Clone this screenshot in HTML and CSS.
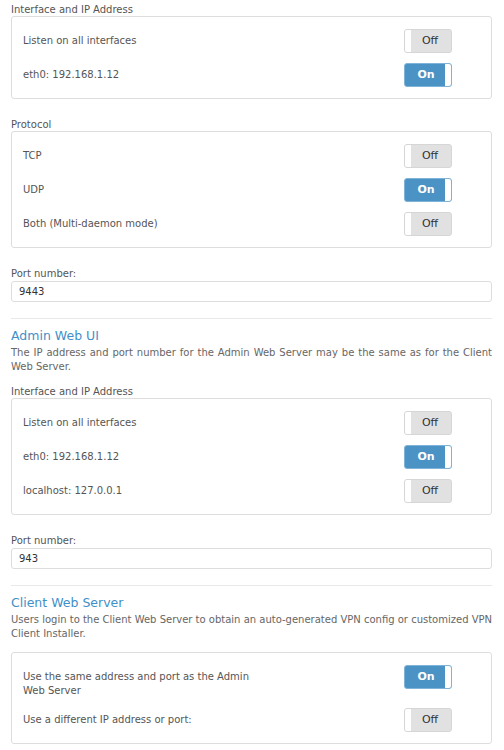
FILE: index.html
```html
<!DOCTYPE html>
<html lang="en">
<head>
  <meta charset="UTF-8">
  <meta name="viewport" content="width=device-width, initial-scale=1.0">
  <title>Web Server Settings</title>
  <link rel="stylesheet" href="styles.css">
</head>
<body>
  <div class="page">
    <div class="field-label">Interface and IP Address</div>
    <div class="box">
      <div class="row">
        <span class="row-text">Listen on all interfaces</span>
        <button class="toggle">Off</button>
      </div>
      <div class="row">
        <span class="row-text">eth0: 192.168.1.12</span>
        <button class="toggle on">On</button>
      </div>
    </div>

    <div class="field-label spaced">Protocol</div>
    <div class="box">
      <div class="row">
        <span class="row-text">TCP</span>
        <button class="toggle">Off</button>
      </div>
      <div class="row">
        <span class="row-text">UDP</span>
        <button class="toggle on">On</button>
      </div>
      <div class="row">
        <span class="row-text">Both (Multi-daemon mode)</span>
        <button class="toggle">Off</button>
      </div>
    </div>

    <div class="field-label spaced">Port number:</div>
    <input class="text-input" type="text" value="9443">

    <hr class="divider">

    <h2 class="section-title">Admin Web UI</h2>
    <p class="section-desc">The IP address and port number for the Admin Web Server may be the same as for the Client Web Server.</p>

    <div class="field-label after-desc">Interface and IP Address</div>
    <div class="box">
      <div class="row">
        <span class="row-text">Listen on all interfaces</span>
        <button class="toggle">Off</button>
      </div>
      <div class="row">
        <span class="row-text">eth0: 192.168.1.12</span>
        <button class="toggle on">On</button>
      </div>
      <div class="row">
        <span class="row-text">localhost: 127.0.0.1</span>
        <button class="toggle">Off</button>
      </div>
    </div>

    <div class="field-label spaced">Port number:</div>
    <input class="text-input" type="text" value="943">

    <hr class="divider">

    <h2 class="section-title">Client Web Server</h2>
    <p class="section-desc">Users login to the Client Web Server to obtain an auto-generated VPN config or customized VPN Client Installer.</p>

    <div class="box after-desc">
      <div class="row">
        <span class="row-text narrow">Use the same address and port as the Admin Web Server</span>
        <button class="toggle on">On</button>
      </div>
      <div class="row">
        <span class="row-text">Use a different IP address or port:</span>
        <button class="toggle">Off</button>
      </div>
    </div>
  </div>
</body>
</html>
```

FILE: styles.css
```css
:root {
  --text: #555555;
  --muted: #666666;
  --line: #dddddd;
  --blue: #4a93c4;
  --title: #3f8fc8;
}

* {
  margin: 0;
  padding: 0;
  box-sizing: border-box;
}

body {
  background: #ffffff;
  font-family: 'DejaVu Sans', Verdana, sans-serif;
  font-size: 10px;
  color: var(--text);
}

.page {
  padding: 3px 12px 0 11px;
}

.field-label {
  line-height: 13px;
  color: var(--text);
}

.field-label.spaced {
  margin-top: 19px;
}

.field-label.after-desc {
  margin-top: 12px;
}

.box {
  border: 1px solid var(--line);
  border-radius: 3px;
  padding: 12px 39px 11px 11px;
  display: flex;
  flex-direction: column;
  gap: 10px;
}

.box.after-desc {
  margin-top: 12px;
}

.row {
  display: flex;
  justify-content: space-between;
  align-items: flex-start;
}

.row-text {
  padding-top: 5px;
  line-height: 14px;
}

.row-text.narrow {
  width: 240px;
}

.toggle {
  position: relative;
  width: 48px;
  height: 24px;
  flex-shrink: 0;
  border: 1px solid #d6d6d6;
  border-radius: 3px;
  background: #e1e1e1;
  color: #333333;
  font-family: inherit;
  font-size: 11px;
  text-align: center;
  line-height: 22px;
  padding-left: 4px;
  cursor: pointer;
}

.toggle::before {
  content: '';
  position: absolute;
  top: 0;
  left: 0;
  width: 6px;
  height: 22px;
  background: #ffffff;
  border-radius: 2px 0 0 2px;
}

.toggle.on {
  background: var(--blue);
  border-color: #7fb3d8;
  color: #ffffff;
  font-weight: bold;
  padding-left: 0;
  padding-right: 4px;
}

.toggle.on::before {
  left: auto;
  right: 0;
  border-radius: 0 2px 2px 0;
}

.text-input {
  display: block;
  width: 100%;
  height: 21px;
  margin-top: 1px;
  border: 1px solid var(--line);
  border-radius: 3px;
  padding: 0 7px;
  font-family: inherit;
  font-size: 10px;
  color: #333333;
  background: #ffffff;
}

.divider {
  border: none;
  border-top: 1px solid #e8e8e8;
  margin-top: 16px;
}

.section-title {
  margin-top: 8px;
  font-size: 12.5px;
  font-weight: normal;
  line-height: 18px;
  color: var(--title);
}

.section-desc {
  margin-top: 1px;
  line-height: 13.5px;
  color: var(--muted);
  text-align: justify;
}
```
